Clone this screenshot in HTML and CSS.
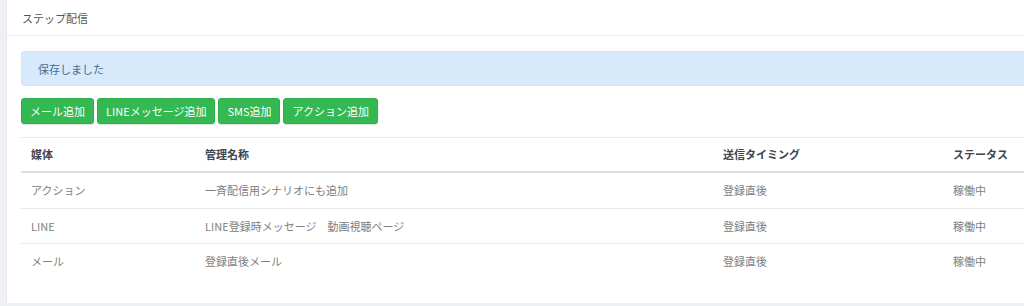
FILE: index.html
```html
<!DOCTYPE html>
<html lang="ja">
<head>
  <meta charset="UTF-8" />
  <meta name="viewport" content="width=device-width, initial-scale=1.0"/>
  <title>ステップ配信</title>
  <link rel="stylesheet" href="styles.css">
</head>
<body>
  <div class="card">
    <div class="card-header">ステップ配信</div>
    <div class="card-body">
      <div class="alert">保存しました</div>

      <div class="actions">
        <button class="btn">メール追加</button>
        <button class="btn">LINEメッセージ追加</button>
        <button class="btn">SMS追加</button>
        <button class="btn">アクション追加</button>
      </div>

      <table class="steps">
        <colgroup>
          <col class="c-media">
          <col class="c-name">
          <col class="c-timing">
          <col class="c-status">
        </colgroup>
        <thead>
          <tr>
            <th>媒体</th>
            <th>管理名称</th>
            <th>送信タイミング</th>
            <th>ステータス</th>
          </tr>
        </thead>
        <tbody>
          <tr>
            <td>アクション</td>
            <td>一斉配信用シナリオにも追加</td>
            <td>登録直後</td>
            <td>稼働中</td>
          </tr>
          <tr>
            <td>LINE</td>
            <td>LINE登録時メッセージ　動画視聴ページ</td>
            <td>登録直後</td>
            <td>稼働中</td>
          </tr>
          <tr>
            <td>メール</td>
            <td>登録直後メール</td>
            <td>登録直後</td>
            <td>稼働中</td>
          </tr>
        </tbody>
      </table>
    </div>
  </div>
</body>
</html>
```

FILE: styles.css
```css
* {
  box-sizing: border-box;
}

body {
  margin: 0;
  padding: 0 0 0 6px;
  background: #eef0f3;
  font-family: "Noto Sans CJK JP", "Noto Sans", sans-serif;
  font-size: 11px;
  color: #7b7b7b;
  overflow: hidden;
  height: 306px;
}

.card {
  background: #fff;
  width: calc(100% + 40px);
  height: 303px;
  border-left: 1px solid #e6e8eb;
}

.card-header {
  height: 36px;
  padding: 0 15px;
  display: flex;
  align-items: center;
  color: #555;
  border-bottom: 1px solid #efefef;
}

.card-body {
  padding: 15px 14px;
}

.alert {
  height: 35px;
  display: flex;
  align-items: center;
  padding: 0 16px;
  background: #d6eafc;
  border: 1px solid #cfe4f8;
  border-radius: 3px;
  color: #456b91;
}

.actions {
  display: flex;
  gap: 3px;
  margin-top: 12px;
}

.btn {
  height: 26px;
  padding: 0 8px;
  border: 1px solid #2fae4b;
  border-radius: 3px;
  background: #33b852;
  color: #fff;
  font-family: inherit;
  font-size: 11px;
  cursor: pointer;
  box-shadow: 0 1px 1px rgba(0, 0, 0, 0.12);
}

.steps {
  width: 100%;
  margin-top: 13px;
  border-collapse: collapse;
  table-layout: fixed;
}

.c-media { width: 174px; }
.c-name { width: 518px; }
.c-timing { width: 230px; }

.steps th,
.steps td {
  text-align: left;
  padding: 0 10px;
  height: 35px;
  border-top: 1px solid #e8e8e8;
}

.steps th {
  height: 34px;
  color: #3f4551;
  font-weight: bold;
  border-bottom: 2px solid #dedede;
}

.steps tbody tr:first-child td {
  height: 37px;
}

.steps td {
  color: #808080;
}
```
